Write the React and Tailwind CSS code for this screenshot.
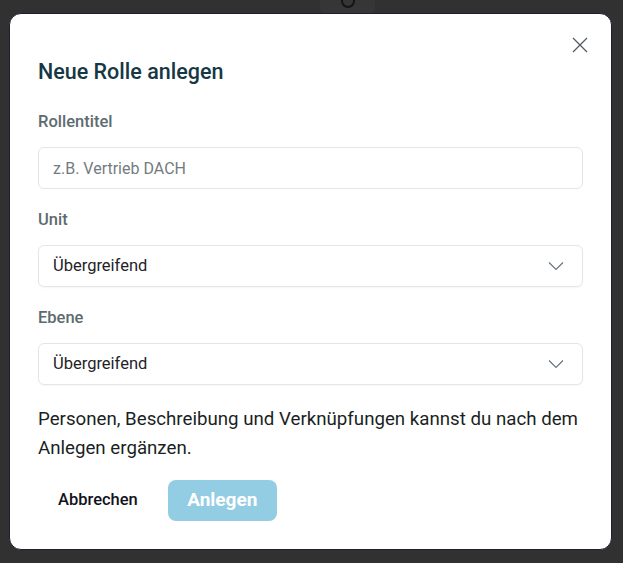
import React from "react";

const font = { fontFamily: 'Roboto, "Noto Sans", sans-serif' };

function Chevron() {
  return (
    <svg width="16" height="10" viewBox="0 0 16 10" fill="none" className="shrink-0">
      <path d="M1 1.5 L8 8.5 L15 1.5" stroke="#6b7280" strokeWidth="1.2" />
    </svg>
  );
}

function Field({ label, children }) {
  return (
    <div className="flex flex-col">
      <label className="text-[16.5px] font-medium text-[#5d6b6f] leading-5 mb-[15px]">{label}</label>
      {children}
    </div>
  );
}

function SelectBox({ value }) {
  return (
    <div className="h-[42px] rounded-md border border-[#e1e7e9] shadow-[0_1px_2px_rgba(0,0,0,0.04)] flex items-center justify-between pl-[14px] pr-[18px] text-[16.5px] text-[#1f2328]">
      <span>{value}</span>
      <Chevron />
    </div>
  );
}

export default function App() {
  return (
    <div className="relative w-[623px] h-[563px] bg-[#313131] overflow-hidden" style={font}>
      {/* page behind the overlay */}
      <div className="absolute left-[320px] -top-[20px] w-[55px] h-[34px] rounded-md bg-[#363636]" />
      <div className="absolute left-[341px] -top-[6px] w-[14px] h-[14px] rounded-full border-2 border-[#151515]" />

      <div className="absolute left-[9px] top-[13px] w-[603px] h-[537px] bg-white rounded-xl border border-[#1c1f2e] px-[28px] pt-[20px]">
        <button className="absolute right-[23px] top-[23px] p-0">
          <svg width="16" height="16" viewBox="0 0 16 16" fill="none">
            <path d="M1 1 L15 15 M15 1 L1 15" stroke="#555b63" strokeWidth="1.3" />
          </svg>
        </button>

        <h2 className="text-[21.5px] font-medium text-[#163844] leading-7 mt-[24px]">Neue Rolle anlegen</h2>

        <div className="mt-[26px] flex flex-col gap-[21px]">
          <Field label="Rollentitel">
            <input
              className="h-[42px] rounded-md border border-[#e1e7e9] px-[14px] text-[16px] outline-none placeholder:text-[#737b80]"
              placeholder="z.B. Vertrieb DACH"
            />
          </Field>
          <Field label="Unit">
            <SelectBox value="Übergreifend" />
          </Field>
          <Field label="Ebene">
            <SelectBox value="Übergreifend" />
          </Field>
        </div>

        <p className="mt-[20px] text-[18.7px] leading-[29px] text-[#1b1f24]">
          Personen, Beschreibung und Verknüpfungen kannst du nach dem Anlegen ergänzen.
        </p>

        <div className="mt-[17px] flex items-center gap-[30px]">
          <button className="ml-[20px] text-[16.5px] font-medium text-[#11131a]">Abbrechen</button>
          <button className="h-[41px] w-[109px] rounded-lg bg-[#93cde4] text-white text-[19px] font-bold">Anlegen</button>
        </div>
      </div>
    </div>
  );
}
